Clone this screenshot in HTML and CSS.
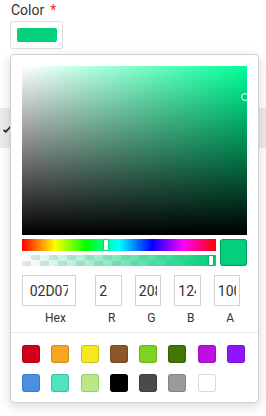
FILE: index.html
```html
<!DOCTYPE html>
<html>
<head>
<meta charset="utf-8">
<link rel="stylesheet" href="styles.css">
</head>
<body>
<div class="form">
  <div class="field">
    <div class="label">Color<span class="req">*</span></div>
    <div class="swatch-btn"><div class="swatch-fill"></div></div>

    <div class="popup">
      <div class="saturation">
        <div class="sat-white"></div>
        <div class="sat-black"></div>
        <div class="sat-pointer" style="left: 99%; top: 18.4%;"></div>
      </div>
      <div class="controls">
        <div class="sliders">
          <div class="hue">
            <div class="slider-pointer" style="left: 43.2%;"></div>
          </div>
          <div class="alpha">
            <div class="alpha-grad"></div>
            <div class="slider-pointer alpha-pointer" style="left: calc(100% - 3px);"></div>
          </div>
        </div>
        <div class="preview"></div>
      </div>
      <div class="fields">
        <div class="f f-hex"><input class="inp" value="02D07C"><span class="flabel">Hex</span></div>
        <div class="f f-num"><input class="inp" value="2"><span class="flabel">R</span></div>
        <div class="f f-num"><input class="inp" value="208"><span class="flabel">G</span></div>
        <div class="f f-num"><input class="inp" value="124"><span class="flabel">B</span></div>
        <div class="f f-num"><input class="inp" value="100"><span class="flabel">A</span></div>
      </div>
      <div class="presets">
        <div class="p" style="background:#D0021B"></div>
        <div class="p" style="background:#F5A623"></div>
        <div class="p" style="background:#F8E71C"></div>
        <div class="p" style="background:#8B572A"></div>
        <div class="p" style="background:#7ED321"></div>
        <div class="p" style="background:#417505"></div>
        <div class="p" style="background:#BD10E0"></div>
        <div class="p" style="background:#9013FE"></div>
        <div class="p" style="background:#4A90E2"></div>
        <div class="p" style="background:#50E3C2"></div>
        <div class="p" style="background:#B8E986"></div>
        <div class="p" style="background:#000000"></div>
        <div class="p" style="background:#4A4A4A"></div>
        <div class="p" style="background:#9B9B9B"></div>
        <div class="p" style="background:#FFFFFF"></div>
      </div>
    </div>
  </div>
  <div class="row">
    <svg class="check" width="8" height="7" viewBox="0 0 8 7"><path d="M0.6 3.8 L2.8 5.9 L7.4 0.8" fill="none" stroke="#222" stroke-width="1.6"/></svg>
  </div>
</div>
</body>
</html>
```
FILE: styles.css
```css
html, body {
  margin: 0;
  padding: 0;
  background: #fff;
  font-family: Roboto, "Liberation Sans", sans-serif;
  color: #333;
}
.form {
  width: 266px;
  height: 416px;
  overflow: hidden;
}
.field {
  position: relative;
  padding-left: 10px;
}
.label {
  font-size: 14px;
  line-height: 20px;
  padding-left: 1px;
  margin-bottom: 1px;
  color: #333;
}
.req {
  color: #f5222d;
  margin-left: 6px;
  font-size: 14px;
}
.swatch-btn {
  width: 53px;
  height: 28px;
  box-sizing: border-box;
  border: 1px solid #dedede;
  border-radius: 2px;
  padding: 6px;
  background: #fff;
}
.swatch-fill {
  width: 40px;
  height: 14px;
  border-radius: 2px;
  background: rgb(2, 208, 124);
}
.row {
  margin-top: 59px;
  height: 40px;
  background: #ebebeb;
  display: flex;
  align-items: center;
  padding-left: 3px;
}
.check { margin-top: 3px; }

.popup {
  position: absolute;
  left: 10px;
  top: 54px;
  width: 225px;
  padding: 11px 11px 10px;
  background: #fff;
  border: 1px solid #d2d2d2;
  border-radius: 4px;
  box-shadow: 0 3px 12px rgba(0, 0, 0, 0.16);
  z-index: 5;
}
.saturation {
  position: relative;
  height: 169px;
  background: rgb(0, 255, 151);
  overflow: hidden;
}
.sat-white, .sat-black {
  position: absolute;
  inset: 0;
}
.sat-white { background: linear-gradient(to right, #fff, rgba(255,255,255,0)); }
.sat-black { background: linear-gradient(to top, #000, rgba(0,0,0,0)); }
.sat-pointer {
  position: absolute;
  width: 8px;
  height: 8px;
  box-sizing: border-box;
  border-radius: 50%;
  border: 1.5px solid #fff;
  box-shadow: 0 0 1px 0 rgba(0,0,0,0.4);
  transform: translate(-50%, -50%);
}
.controls {
  display: flex;
  margin-top: 4px;
}
.sliders {
  flex: 1;
  display: flex;
  flex-direction: column;
  gap: 4px;
}
.hue {
  position: relative;
  height: 12px;
  background: linear-gradient(to right, #f00 0%, #ff0 17%, #0f0 33%, #0ff 50%, #00f 67%, #f0f 83%, #f00 100%);
}
.alpha {
  position: relative;
  height: 11px;
  background-color: #fff;
  background-image: conic-gradient(#e6e6e6 25%, #fff 0 50%, #e6e6e6 0 75%, #fff 0);
  background-size: 18px 11px;
}
.alpha-grad {
  position: absolute;
  inset: 0;
  background: linear-gradient(to right, rgba(2,208,124,0), rgb(2,208,124));
}
.slider-pointer {
  position: absolute;
  top: 1px;
  width: 4px;
  height: 10px;
  margin-left: -2px;
  box-sizing: border-box;
  background: #fff;
  border-radius: 1px;
  box-shadow: 0 0 2px rgba(0,0,0,0.6);
}
.alpha-pointer {
  top: 1px;
  height: 9px;
  margin-left: -4px;
}
.preview {
  width: 27px;
  height: 27px;
  margin-left: 4px;
  border-radius: 3px;
  background: rgb(2, 208, 124);
  box-shadow: inset 0 0 0 1px rgba(0,0,0,0.15), inset 0 0 3px rgba(0,0,0,0.2);
}
.fields {
  display: flex;
  padding-top: 9px;
}
.f {
  display: flex;
  flex-direction: column;
  min-width: 0;
}
.f-hex { flex: 2; }
.f-num { flex: 1; padding-left: 6px; }
.inp {
  width: 80%;
  height: 31px;
  box-sizing: border-box;
  margin: 0;
  padding: 0 10%;
  border: 1px solid #d3d3d3;
  border-radius: 0;
  font-family: Roboto, "Liberation Sans", sans-serif;
  font-size: 14px;
  color: #333;
  background: #fff;
  outline: none;
}
.flabel {
  display: block;
  text-align: center;
  font-size: 12px;
  line-height: 14px;
  padding-top: 5px;
  padding-bottom: 7px;
  color: #333;
}
.presets {
  margin: 0 -11px;
  padding: 12px 11px 0;
  border-top: 1px solid #ebebeb;
  display: grid;
  grid-template-columns: repeat(8, 18px);
  column-gap: 11.3px;
  row-gap: 11px;
}
.p {
  width: 18px;
  height: 18px;
  border-radius: 3px;
  box-shadow: inset 0 0 0 1px rgba(0,0,0,0.15);
}
```
